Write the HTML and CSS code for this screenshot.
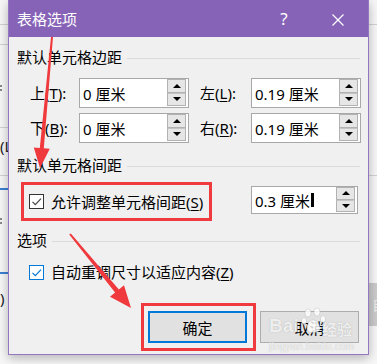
FILE: index.html
```html
<!DOCTYPE html>
<html lang="zh-CN">
<head>
<meta charset="utf-8">
<title>表格选项</title>
<link rel="stylesheet" href="styles.css">
</head>
<body>
<div class="backdrop">
  <div class="bd-line bd-l1"></div>
  <div class="bd-line bd-l2"></div>
  <div class="bd-dots bd-d1"></div>
  <div class="bd-line bd-l3"></div>
  <div class="bd-text bd-t1">(L</div>
  <div class="bd-line bd-l4"></div>
  <div class="bd-blue bd-b1"></div>
  <div class="bd-dots bd-d2"></div>
  <div class="bd-blue bd-b2"></div>
  <div class="bd-text bd-t2">)</div>
  <div class="bd-line bd-r1"></div>
  <div class="bd-line bd-r2"></div>
  <div class="bd-block">自</div>
</div>

<div class="dialog">
  <div class="titlebar">
    <span class="title">表格选项</span>
    <span class="tb-btn tb-help">?</span>
    <span class="tb-btn tb-close">
      <svg width="12" height="12" viewBox="0 0 12 12"><path d="M0.5 0.5 L11.5 11.5 M11.5 0.5 L0.5 11.5" stroke="#fff" stroke-width="1.2" fill="none"/></svg>
    </span>
  </div>

  <div class="body">
    <div class="group-head"><span>默认单元格边距</span><span class="rule"></span></div>
    <div class="margins">
      <span class="lbl">上(<u>T</u>):</span>
      <div class="spin"><span class="spin-value">0 厘米</span><span class="spin-btns"><span class="sb"><i class="up"></i></span><span class="sb"><i class="down"></i></span></span></div>
      <span class="lbl">左(<u>L</u>):</span>
      <div class="spin"><span class="spin-value">0.19 厘米</span><span class="spin-btns"><span class="sb"><i class="up"></i></span><span class="sb"><i class="down"></i></span></span></div>
      <span class="lbl">下(<u>B</u>):</span>
      <div class="spin"><span class="spin-value">0 厘米</span><span class="spin-btns"><span class="sb"><i class="up"></i></span><span class="sb"><i class="down"></i></span></span></div>
      <span class="lbl">右(<u>R</u>):</span>
      <div class="spin"><span class="spin-value">0.19 厘米</span><span class="spin-btns"><span class="sb"><i class="up"></i></span><span class="sb"><i class="down"></i></span></span></div>
    </div>

    <div class="group-head gh2"><span>默认单元格间距</span><span class="rule"></span></div>
    <div class="spacing-row">
      <div class="redbox check-line">
        <span class="cb cb-dark"><svg width="13" height="13" viewBox="0 0 13 13"><path d="M2.5 6.8 L5.3 9.6 L11 3.6" stroke="#444" stroke-width="1.2" fill="none"/></svg></span>
        <span class="cb-text">允许调整单元格间距(<u>S</u>)</span>
      </div>
      <div class="spin spin-small"><span class="spin-value">0.3 厘米<i class="caret"></i></span><span class="spin-btns"><span class="sb"><i class="up"></i></span><span class="sb"><i class="down"></i></span></span></div>
    </div>

    <div class="group-head gh3"><span>选项</span><span class="rule"></span></div>
    <div class="check-line opt-row">
      <span class="cb cb-blue"><svg width="13" height="13" viewBox="0 0 13 13"><path d="M2.5 6.8 L5.3 9.6 L11 3.6" stroke="#0078d7" stroke-width="1.2" fill="none"/></svg></span>
      <span class="cb-text">自动重调尺寸以适应内容(<u>Z</u>)</span>
    </div>

    <div class="buttons">
      <div class="redbox-btn"><button class="btn btn-default">确定</button></div>
      <button class="btn">取消</button>
    </div>
  </div>

  <div class="watermark">
    <span class="wm-bai">Bai</span>
    <svg class="wm-paw" width="26" height="28" viewBox="0 0 26 28"><g fill="rgba(255,255,255,0.8)" stroke="rgba(120,120,120,0.35)" stroke-width="0.6"><ellipse cx="7" cy="6" rx="3" ry="4"/><ellipse cx="16" cy="5" rx="3" ry="4"/><ellipse cx="3" cy="14" rx="2.6" ry="3.4"/><ellipse cx="22" cy="12" rx="2.6" ry="3.4"/><path d="M12 13 C7 13 4 21 7 24 C9 26 15 26 18 24 C21 21 17 13 12 13 Z"/></g></svg>
    <span class="wm-jy">经验</span>
    <div class="wm-url">jingyan.baidu.com</div>
  </div>
</div>

<svg class="arrows" width="377" height="364" viewBox="0 0 377 364">
  <polygon fill="#f0393d" points="53,37.1 43.8,148.3 49.8,148.8 40,168 33.8,147.4 39.8,147.9 51,36.9"/>
  <polygon fill="#f0393d" points="69.2,234.6 115.1,292.6 110,296.7 131,308 124,285.3 118.9,289.4 70.8,233.4"/>
</svg>
</body>
</html>
```

FILE: styles.css
```css
html, body {
  margin: 0;
  padding: 0;
}

body {
  width: 377px;
  height: 364px;
  overflow: hidden;
  position: relative;
  background: #f7f7f7;
  font-family: "Noto Sans", "Noto Sans CJK SC", sans-serif;
  color: #000;
}

/* ---------- document behind the dialog ---------- */
.backdrop {
  position: absolute;
  inset: 0;
  z-index: 0;
}
.bd-line {
  position: absolute;
  height: 1px;
  background: #d2d2d2;
}
.bd-l1 { left: 0; width: 8px; top: 24px; }
.bd-l2 { left: 0; width: 8px; top: 44px; }
.bd-l3 { left: 0; width: 8px; top: 127px; }
.bd-l4 { left: 0; width: 8px; top: 175px; }
.bd-r1 { left: 369px; width: 8px; top: 24px; }
.bd-r2 { left: 369px; width: 8px; top: 175px; }
.bd-blue {
  position: absolute;
  left: 0;
  width: 8px;
  height: 2px;
  background: #3b7fd1;
}
.bd-b1 { top: 188px; }
.bd-b2 { top: 272px; }
.bd-dots {
  position: absolute;
  left: 0;
  width: 2px;
  height: 6px;
  border-top: 2px dotted #888;
  border-bottom: 2px dotted #888;
  box-sizing: border-box;
}
.bd-d1 { top: 85px; }
.bd-d2 { top: 218px; }
.bd-text {
  position: absolute;
  left: 0;
  font-size: 15px;
  line-height: 16px;
  color: #222;
}
.bd-t1 { top: 138px; }
.bd-t2 { top: 290px; }
.bd-block {
  position: absolute;
  left: 369px;
  top: 283px;
  width: 8px;
  height: 43px;
  background: #cbcbcb;
  color: #eee;
  font-size: 14px;
  line-height: 43px;
  text-indent: 3px;
  overflow: hidden;
}

/* ---------- dialog ---------- */
.dialog {
  position: relative;
  z-index: 1;
  margin-left: 8px;
  width: 361px;
  height: 355px;
  box-sizing: border-box;
  border: 1px solid #9477c2;
  border-top: 0;
  background: #f0f0f0;
  box-shadow: 0 3px 10px rgba(0, 0, 0, 0.28);
}

.titlebar {
  height: 37px;
  background: #8763b8;
  display: flex;
  align-items: center;
  color: #fff;
  padding-left: 8px;
  padding-right: 3px;
}
.title {
  font-size: 15px;
  line-height: 20px;
  flex: 1;
  margin-top: 1px;
}
.tb-btn {
  width: 54px;
  display: flex;
  justify-content: center;
  align-items: center;
}
.tb-help {
  font-size: 17px;
  line-height: 20px;
  margin-top: 1px;
}
.tb-close svg { display: block; margin-top: 2px; }

.body {
  padding: 10px 8px 0 8px;
}

.group-head {
  display: flex;
  align-items: center;
  gap: 5px;
  font-size: 15px;
  line-height: 20px;
}
.group-head .rule {
  flex: 1;
  height: 1px;
  background: #dadada;
  margin-top: 3px;
}
.gh2 { margin-top: 12px; }
.gh3 { margin-top: 9px; }

.margins {
  display: grid;
  grid-template-columns: 49px 121px 51px 110px;
  grid-auto-rows: 30px;
  row-gap: 5px;
  margin: 11px 0 0 13px;
  align-items: center;
}
.lbl {
  font-size: 15px;
  line-height: 20px;
}
.lbl u { text-underline-offset: 2px; }

/* spin box */
.spin {
  display: flex;
  width: 110px;
  height: 30px;
  box-sizing: border-box;
  border: 1px solid #a8a8a8;
  background: #fff;
}
.spin-value {
  flex: 1;
  display: flex;
  align-items: center;
  padding-left: 3px;
  font-size: 15px;
  white-space: nowrap;
}
.spin-btns {
  width: 19px;
  display: flex;
  flex-direction: column;
  margin: 0 2px 1px 0;
}
.sb {
  flex: 1;
  border: 1px solid #b2b2b2;
  background: #e6e6e6;
  display: flex;
  align-items: center;
  justify-content: center;
}
.sb + .sb { border-top-color: #c4c4c4; }
.up, .down {
  display: block;
  width: 0;
  height: 0;
  border-left: 4px solid transparent;
  border-right: 4px solid transparent;
}
.up { border-bottom: 4px solid #000; }
.down { border-top: 4px solid #000; }

.caret {
  display: inline-block;
  width: 3px;
  height: 14px;
  background: #000;
  margin-left: 1px;
}

/* spacing row */
.spacing-row {
  display: flex;
  align-items: flex-start;
  margin-top: 7px;
}
.check-line {
  display: flex;
  align-items: center;
  gap: 7px;
  font-size: 15px;
  line-height: 20px;
}
.redbox {
  margin-left: 4px;
  width: 191px;
  height: 39px;
  box-sizing: border-box;
  border: 3px solid #ef3b3e;
  padding-left: 5px;
}
.spin-small {
  height: 28px;
  width: 107px;
  margin: 4px 0 0 39px;
}

.cb {
  width: 15px;
  height: 15px;
  box-sizing: border-box;
  background: #fff;
  display: flex;
  align-items: center;
  justify-content: center;
  flex: none;
}
.cb svg { display: block; }
.cb-dark { border: 1px solid #333; }
.cb-blue { border: 1px solid #0078d7; }
.cb-text u { text-underline-offset: 2px; }

.opt-row {
  margin: 12px 0 0 12px;
}

/* buttons */
.buttons {
  display: flex;
  justify-content: flex-end;
  align-items: center;
  gap: 4px;
  margin: 21px 1px 0 0;
}
.redbox-btn {
  border: 3px solid #ef3b3e;
  padding: 5px 6px 5px 4px;
}
.btn {
  display: block;
  width: 99px;
  height: 32px;
  box-sizing: border-box;
  border: 1px solid #adadad;
  background: #e1e1e1;
  font-family: "Noto Sans", "Noto Sans CJK SC", sans-serif;
  font-size: 15px;
  color: #000;
  padding: 0;
}
.btn-default {
  border: 2px solid #0078d7;
}

/* Baidu watermark over the cancel button */
.watermark {
  position: absolute;
  left: 252px;
  top: 301px;
  width: 100px;
  height: 50px;
  pointer-events: none;
  color: rgba(255, 255, 255, 0.82);
  text-shadow: 0 0 1px rgba(90, 90, 90, 0.45);
}
.wm-bai {
  position: absolute;
  left: 8px;
  top: 14px;
  font-family: "Liberation Sans", sans-serif;
  font-weight: bold;
  font-size: 19px;
  line-height: 22px;
}
.wm-paw {
  position: absolute;
  left: 40px;
  top: 6px;
}
.wm-jy {
  position: absolute;
  left: 61px;
  top: 19px;
  font-size: 15px;
  line-height: 18px;
  font-weight: bold;
}
.wm-url {
  position: absolute;
  left: 8px;
  top: 40px;
  font-family: "Liberation Sans", sans-serif;
  font-size: 10px;
  line-height: 12px;
  letter-spacing: 0.3px;
}

.arrows {
  position: absolute;
  left: 0;
  top: 0;
  z-index: 2;
  pointer-events: none;
}
```
